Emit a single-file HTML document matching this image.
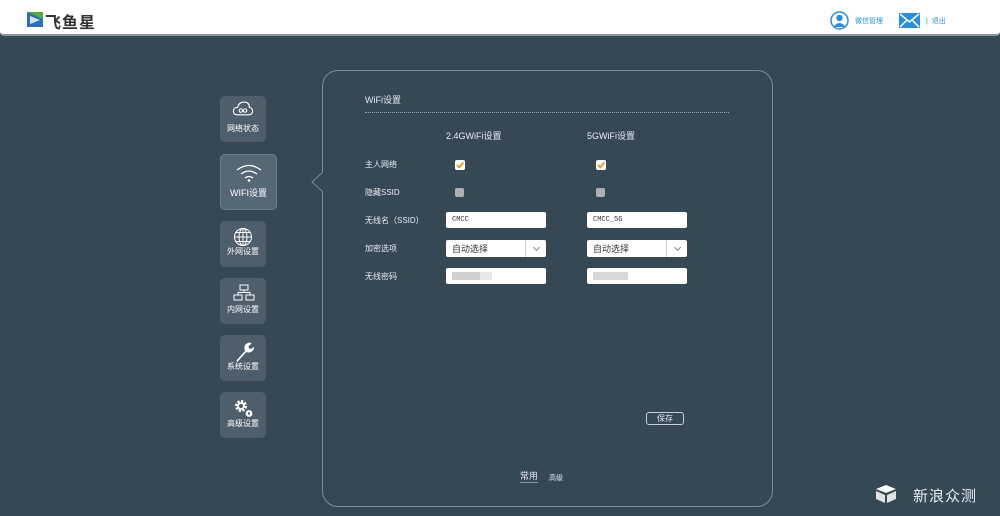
<!DOCTYPE html>
<html><head><meta charset="utf-8"><style>
*{margin:0;padding:0;box-sizing:border-box}
body{width:1000px;height:516px;background:#374855;font-family:"Liberation Sans","Noto Sans CJK SC",sans-serif;position:relative;overflow:hidden;color:#e6eaee}
.hdr{position:absolute;left:0;top:0;width:1000px;height:36px;background:#fff;border-bottom:2px solid #8a96a0;border-radius:0 0 4px 4px}
.a{position:absolute}
.btn{position:absolute;left:220px;width:46px;height:46px;background:#4e5e6a;border-radius:5px;font-size:8px;color:#fff;text-align:center}
.btn span{position:absolute;left:0;right:0;bottom:9px}
.btn svg{position:absolute;left:13px;top:6px}
.panel{position:absolute;left:322px;top:70px;width:451px;height:437px;border:1px solid #7d8c97;border-radius:16px}
.lbl{position:absolute;left:365px;font-size:8px;color:#e8ecef}
.inp{position:absolute;width:100px;height:16px;background:#fff;border-radius:2px;font-size:7px;color:#333;padding:4px 6px;font-family:"Liberation Mono",monospace}
.sel{position:absolute;width:100px;height:17px;background:#fff;border-radius:2px;font-size:9px;color:#333;padding:2px 6px}
.sel:after{content:"";position:absolute;right:0;top:0;width:20px;height:17px;border-left:1px solid #ccc}
.sel i{position:absolute;right:7px;top:5px;width:5px;height:5px;border-right:1px solid #888;border-bottom:1px solid #888;transform:rotate(45deg)}
.cb{position:absolute;width:9px;height:9px;border-radius:2px;background:#aab0b5}
</style></head><body>
<div class="hdr"></div>
<svg class="a" style="left:27px;top:12px" width="16" height="15"><rect width="16" height="15" fill="#2b6fb5"/><polygon points="0,0 16,0 16,7" fill="#5aa545"/><polygon points="3,4 13,8 3,12" fill="#fff" opacity=".8"/></svg>
<div class="a" style="left:45px;top:9px;font-size:16px;font-weight:bold;color:#333;letter-spacing:1px">飞鱼星</div>
<svg class="a" style="left:830px;top:11px" width="19" height="19"><circle cx="9.5" cy="9.5" r="8.5" fill="#fff" stroke="#2a8fd8" stroke-width="1.5"/><circle cx="9.5" cy="7" r="3.2" fill="#2a8fd8"/><path d="M3.5 16 Q9.5 8 15.5 16" fill="#2a8fd8"/></svg>
<div class="a" style="left:855px;top:16px;font-size:7px;color:#2a8fd8">微信管理</div>
<svg class="a" style="left:899px;top:13px" width="21" height="15"><rect width="21" height="15" fill="#2a8fd8"/><path d="M1 1 L10.5 9 L20 1 M1 14 L8 7 M20 14 L13 7" stroke="#fff" stroke-width="1.5" fill="none"/></svg>
<div class="a" style="left:926px;top:16px;font-size:7px;color:#2a8fd8">| &nbsp;退出</div>

<div class="btn" style="top:96px"><svg style="left:12px;top:5px" width="22" height="17" viewBox="0 0 20 16"><path d="M5 13 Q1 13 1 9.5 Q1 6 5 6 Q6 1 11 1 Q16 1 16 6 Q19 6.5 19 9.5 Q19 13 15 13 Z" fill="none" stroke="#fff" stroke-width="1"/><circle cx="8" cy="9" r="1.6" fill="none" stroke="#fff"/><circle cx="12" cy="9" r="1.6" fill="none" stroke="#fff"/></svg><span style="bottom:8px">网络状态</span></div>
<div class="btn" style="top:154px;width:57px;height:56px;background:#566874;border:1px solid #6f808b"><svg style="left:14px;top:9px" width="28" height="18" viewBox="0 0 28 18"><path d="M2 6 Q14 -3 26 6 M6 10 Q14 4 22 10 M10 14 Q14 11 18 14" stroke="#fff" stroke-width="1.3" fill="none"/><circle cx="14" cy="16.5" r="1.3" fill="#fff"/></svg><span style="bottom:10px;font-size:9px">WIFI设置</span></div>
<div class="btn" style="top:221px"><svg width="20" height="20" viewBox="0 0 20 20"><circle cx="10" cy="10" r="8.5" fill="none" stroke="#fff"/><ellipse cx="10" cy="10" rx="4" ry="8.5" fill="none" stroke="#fff"/><path d="M1.5 10 H18.5 M3 5.5 H17 M3 14.5 H17 M10 1.5 V18.5" stroke="#fff"/></svg><span style="bottom:10px">外网设置</span></div>
<div class="btn" style="top:278px"><svg width="22" height="18" viewBox="0 0 22 18"><rect x="7" y="1" width="8" height="5" fill="none" stroke="#fff"/><rect x="1" y="11" width="8" height="5" fill="none" stroke="#fff"/><rect x="13" y="11" width="8" height="5" fill="none" stroke="#fff"/><path d="M11 6 V8.5 H5 V11 M11 8.5 H17 V11" fill="none" stroke="#fff"/></svg><span>内网设置</span></div>
<div class="btn" style="top:335px"><svg width="22" height="22" viewBox="0 0 20 20"><path d="M3 18 L11 9 Q9 4 13 2 Q15 1 17 2 L14 5 L15 7 L17 7 L19 5 Q19.5 9 16 10 Q14 11 12 10 L4 19 Z" fill="#fff"/></svg><span>系统设置</span></div>
<div class="btn" style="top:392px"><svg width="22" height="22" viewBox="0 0 22 20"><circle cx="8" cy="7" r="4.5" fill="none" stroke="#fff" stroke-width="3" stroke-dasharray="2.2 1.3"/><circle cx="8" cy="7" r="3" fill="none" stroke="#fff" stroke-width="1.8"/><circle cx="16" cy="14.5" r="2.3" fill="none" stroke="#fff" stroke-width="2.2"/></svg><span>高级设置</span></div>

<div class="panel"></div>
<svg class="a" style="left:311px;top:172px" width="13" height="20"><path d="M12 0 L1 10 L12 20" fill="#374855" stroke="#7d8c97"/><rect x="12" y="0" width="2" height="20" fill="#374855"/></svg>

<div class="a" style="left:365px;top:93px;font-size:9px">WiFi设置</div>
<div class="a" style="left:365px;top:112px;width:364px;border-top:1px dotted #9aa6ae"></div>
<div class="a" style="left:446px;top:129px;font-size:9px">2.4GWiFi设置</div>
<div class="a" style="left:587px;top:129px;font-size:9px">5GWiFi设置</div>

<div class="lbl" style="top:159px">主人网络</div>
<div class="lbl" style="top:187px">隐藏SSID</div>
<div class="lbl" style="top:215px">无线名（SSID）</div>
<div class="lbl" style="top:243px">加密选项</div>
<div class="lbl" style="top:271px">无线密码</div>

<svg class="a" style="left:455px;top:160px" width="10" height="10"><rect width="10" height="10" rx="2" fill="#fff"/><path d="M2 5 L4.3 7.3 L8.5 2.5" stroke="#f09a2a" stroke-width="2" fill="none"/></svg>
<svg class="a" style="left:596px;top:160px" width="10" height="10"><rect width="10" height="10" rx="2" fill="#fff"/><path d="M2 5 L4.3 7.3 L8.5 2.5" stroke="#f09a2a" stroke-width="2" fill="none"/></svg>
<div class="cb" style="left:455px;top:188px"></div>
<div class="cb" style="left:596px;top:188px"></div>

<div class="inp" style="left:446px;top:212px">CMCC</div>
<div class="inp" style="left:587px;top:212px">CMCC_5G</div>
<div class="sel" style="left:446px;top:240px">自动选择<i></i></div>
<div class="sel" style="left:587px;top:240px">自动选择<i></i></div>
<div class="inp" style="left:446px;top:268px"><div style="position:absolute;left:6px;top:4px;width:28px;height:8px;background:#d0d0d0"></div><div style="position:absolute;left:34px;top:4px;width:12px;height:8px;background:#e8e8e8"></div></div>
<div class="inp" style="left:587px;top:268px"><div style="position:absolute;left:6px;top:4px;width:35px;height:8px;background:#d8d8d8"></div></div>

<div class="a" style="left:646px;top:412px;width:38px;height:13px;border:1px solid #c8d0d5;border-radius:3px;font-size:8px;text-align:center;line-height:11px">保存</div>
<div class="a" style="left:520px;top:471px;font-size:9px;border-bottom:1px solid #8a96a0;line-height:11px">常用</div>
<div class="a" style="left:549px;top:473px;font-size:7px">高级</div>

<svg class="a" style="left:875px;top:485px" width="22" height="18"><path d="M1 4 L11 0 L21 4 L11 8 Z" fill="#fff"/><path d="M1 6 L10 10 L10 18 L1 14 Z M12 10 L21 6 L21 14 L12 18 Z" fill="#fff" opacity=".85"/></svg>
<div class="a" style="left:913px;top:485px;font-size:15px;color:#e8ecef;letter-spacing:1px">新浪众测</div>
</body></html>
